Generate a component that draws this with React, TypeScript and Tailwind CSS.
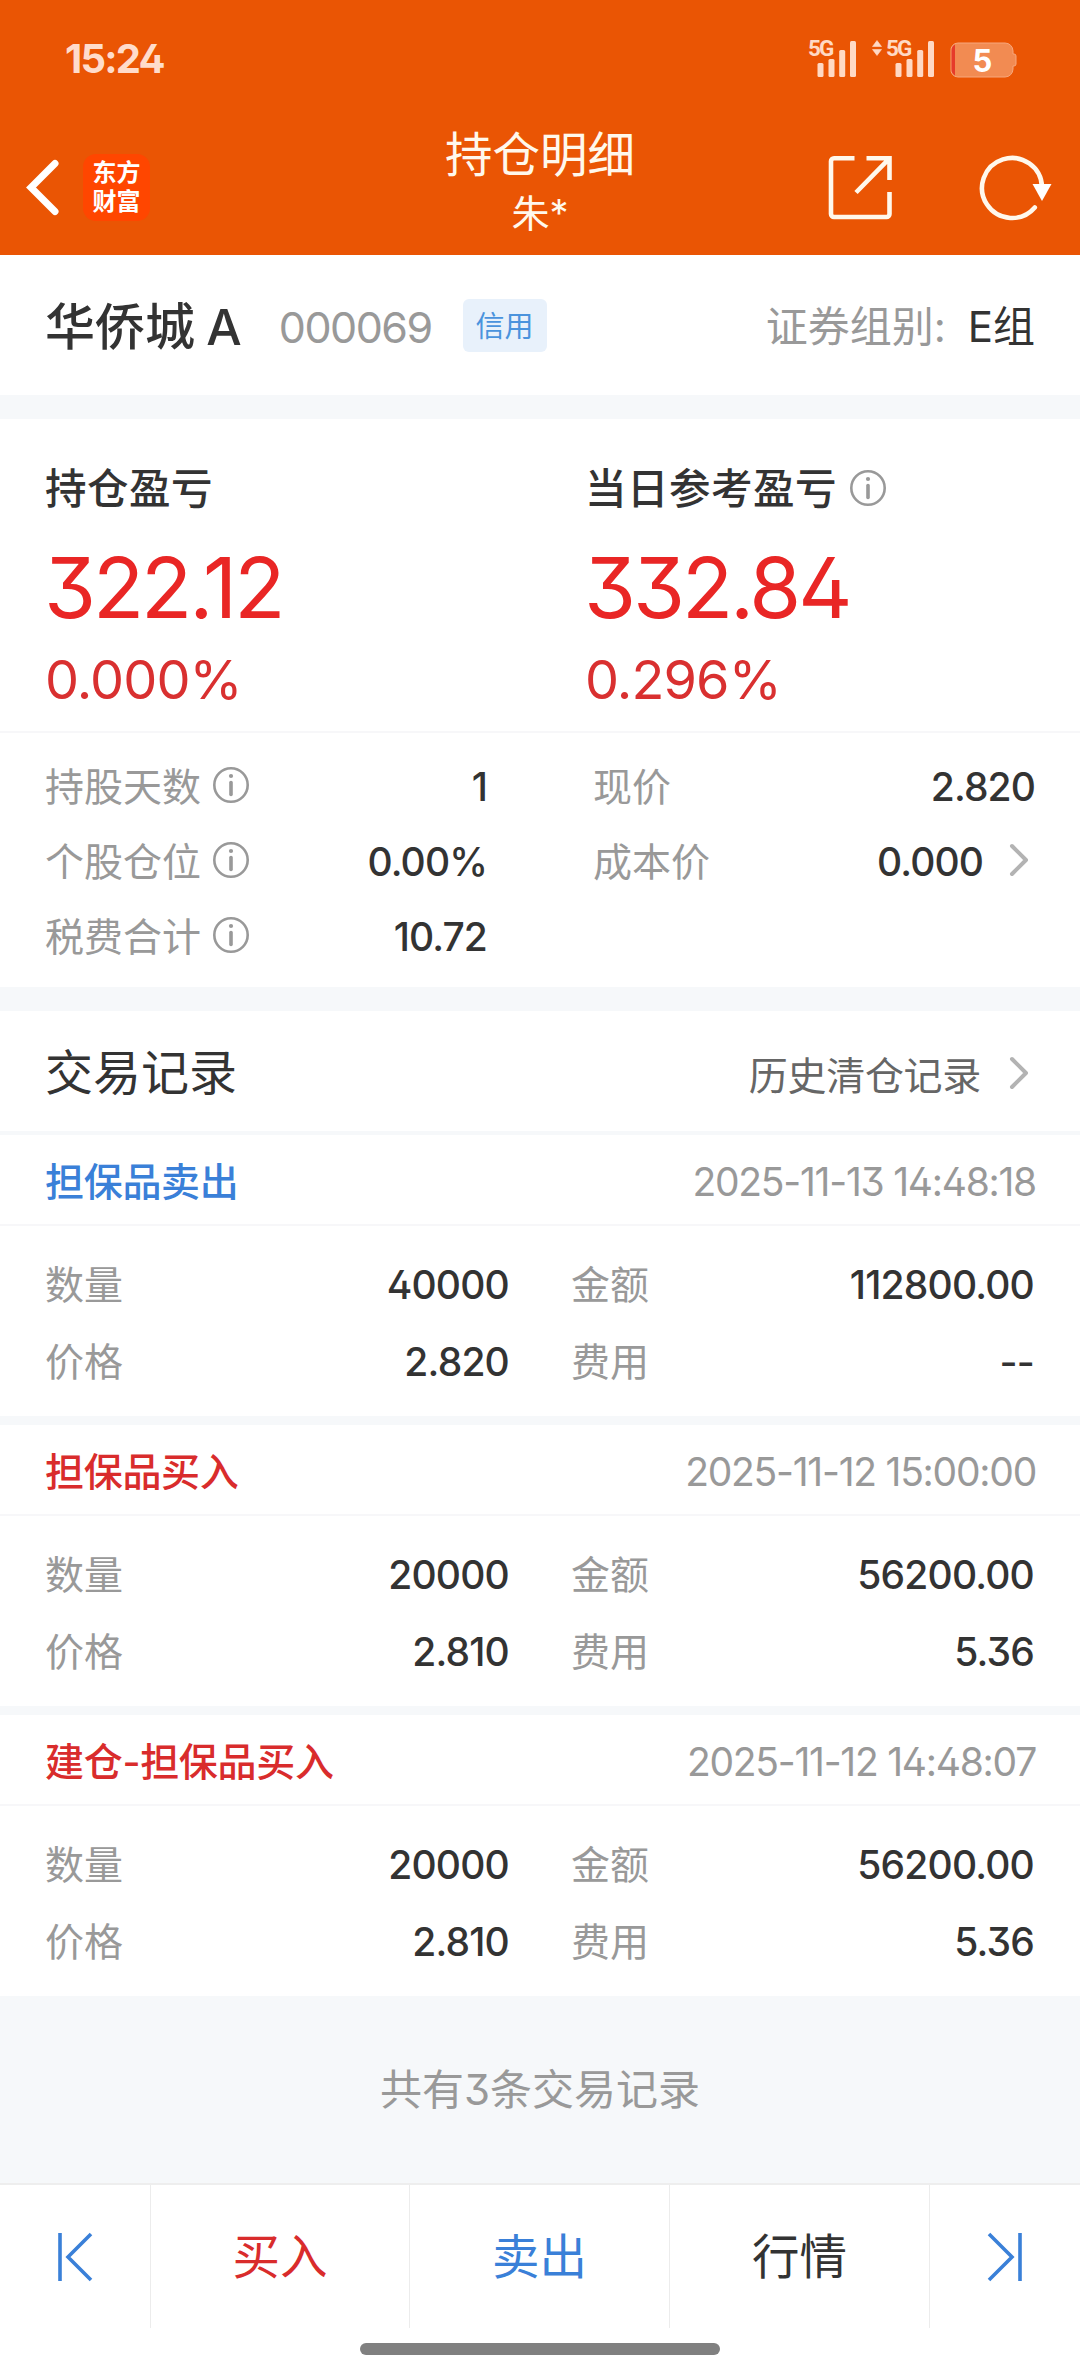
import { clsx } from "clsx"

type Trade = {
  title: string
  side: "buy" | "sell"
  time: string
  amount: string
  price: string
  total: string
  fee: string
}

const trades: Trade[] = [
  {
    title: "担保品卖出",
    side: "sell",
    time: "2025-11-13 14:48:18",
    amount: "40000",
    price: "2.820",
    total: "112800.00",
    fee: "--",
  },
  {
    title: "担保品买入",
    side: "buy",
    time: "2025-11-12 15:00:00",
    amount: "20000",
    price: "2.810",
    total: "56200.00",
    fee: "5.36",
  },
  {
    title: "建仓-担保品买入",
    side: "buy",
    time: "2025-11-12 14:48:07",
    amount: "20000",
    price: "2.810",
    total: "56200.00",
    fee: "5.36",
  },
]

function InfoIcon({ className }: { className?: string }) {
  return (
    <svg viewBox="0 0 36 36" className={clsx("w-9 h-9 shrink-0 text-[#999]", className)} fill="none" stroke="currentColor">
      <circle cx="18" cy="18" r="16.7" strokeWidth="2.6" />
      <path d="M18 15.5v12" strokeWidth="3.6" strokeLinecap="round" />
      <circle cx="18" cy="9" r="2.1" fill="currentColor" stroke="none" />
    </svg>
  )
}

function Chevron({ className }: { className?: string }) {
  return (
    <svg viewBox="0 0 20 34" className={clsx("w-5 h-[34px] shrink-0", className)} fill="none" stroke="#b3b3b3" strokeWidth="4" strokeLinecap="round" strokeLinejoin="round">
      <path d="M3 3l14 14L3 31" />
    </svg>
  )
}

function Signal({ arrows }: { arrows?: boolean }) {
  return (
    <div className="relative w-[49px] h-[38px] text-[#ffd9c4]">
      {arrows && (
        <svg viewBox="0 0 10 16" className="absolute -left-[14px] top-px w-[10px] h-4" fill="currentColor" stroke="currentColor" strokeWidth="0.6" strokeLinejoin="round">
          <path d="M5 .5l4.500 6h-9zM5 15.500l-4.500-6h9z" />
        </svg>
      )}
      <span className="absolute left-0 top-0 text-[22.5px] leading-[19px] font-bold tracking-[-2px] font-[Roboto,sans-serif]">5G</span>
      <svg viewBox="0 0 49 38" className="absolute inset-0 w-[49px] h-[38px]" fill="currentColor">
        <rect x="9.5" y="24" width="6" height="14" rx="1.5" />
        <rect x="20.5" y="20" width="6" height="18" rx="1.5" />
        <rect x="31.2" y="11" width="6" height="27" rx="1.5" />
        <rect x="42" y="2" width="6" height="36" rx="1.5" />
      </svg>
    </div>
  )
}

function StatusBar() {
  return (
    <div className="flex h-[116px] items-start justify-between pl-[65px] pr-[62px]">
      <span className="mt-[39px] text-[40px] leading-10 font-bold tracking-[-1.8px] text-[#ffdccb]">15:24</span>
      <div className="flex pt-[39px]">
        <Signal />
        <div className="w-[29px]" />
        <Signal arrows />
        <svg viewBox="0 0 68 36" className="ml-[15px] mt-[3px] w-[68px] h-9">
          <path d="M8 1h47a8 8 0 0 1 8 8v3h1a2 2 0 0 1 2 2v8a2 2 0 0 1-2 2h-1v3a8 8 0 0 1-8 8H8a7 7 0 0 1-7-8V9a7 7 0 0 1 7-8z" fill="#f28b52" stroke="#f7a77c" />
          <path d="M5 2.5v31A7 7 0 0 1 1.5 27V9A7 7 0 0 1 5 2.5z" fill="#e63b2a" />
          <text x="32.5" y="29.5" textAnchor="middle" fontSize="31" fontWeight="700" fontFamily="Inter, sans-serif" fill="#fff">5</text>
        </svg>
      </div>
    </div>
  )
}

function Header() {
  return (
    <header className="h-[255px] bg-[#ea5504] text-[#fff8ec]">
      <StatusBar />
      <div className="grid grid-cols-[1fr_auto_1fr] h-[139px]">
        <div className="flex items-start pl-[25px] pt-[38px]">
          <svg viewBox="0 0 36 68" className="w-9 h-[68px]" fill="none" stroke="#fff" strokeWidth="7" strokeLinecap="round">
            <path d="M30 9.5L6 33.5l24 24" />
          </svg>
          <div className="ml-[22px] flex flex-col items-center w-[67px] h-[67px] pt-1 rounded-[13px] bg-[#ff4600] text-[24px] leading-[29px] font-bold text-white">
            <span>东方</span>
            <span>财富</span>
          </div>
        </div>
        <div className="text-center">
          <h1 className="mt-[11px] text-[47.5px] leading-[56px]">持仓明细</h1>
          <p className="mt-[3px] text-[38px] leading-[54px]">朱*</p>
        </div>
        <div className="flex items-start justify-end pr-[27px] pt-[38px]">
          <svg viewBox="0 0 64 66" className="w-16 h-[66px]" fill="none" stroke="currentColor" strokeWidth="4.6">
            <path d="M26.5 4.3H6a3 3 0 0 0-3 3V60a3 3 0 0 0 3 3h52.5a3 3 0 0 0 3-3V38M38.5 4.3h23V26M28 38.5L61 4.8" />
          </svg>
          <svg viewBox="0 0 74 68" className="ml-[87px] w-[74px] h-[68px]" fill="none" stroke="currentColor" strokeWidth="4.6" strokeLinecap="round">
            <path d="M55.8 53.5A30 30 0 1 1 63 33" />
            <path d="M53.5 30h19L63 47z" fill="#fff" stroke="none" />
          </svg>
        </div>
      </div>
    </header>
  )
}

function Metric({ label, value, info, arrow, right }: { label: string; value: string; info?: boolean; arrow?: boolean; right?: boolean }) {
  return (
    <div className={clsx("flex h-[75px] items-center", right ? "pl-[53px] pr-[45px]" : "pl-[45px] pr-[53px]")}>
      <span className="text-[39px] text-[#999]">{label}</span>
      {info && <InfoIcon className="ml-3 -mt-1" />}
      <span className="ml-auto text-[39px] font-medium tracking-[-0.9px]">{value}</span>
      {arrow && <Chevron className="ml-[26px] mr-[6px] -mt-1" />}
    </div>
  )
}

function Profit({ label, value, percent, info }: { label: string; value: string; percent: string; info?: boolean }) {
  return (
    <div className="pl-[45px] pt-[39px]">
      <div className="flex h-[60px] items-center">
        <span className="mt-[3px] text-[41.5px] font-medium tracking-[0.5px]">{label}</span>
        {info && <InfoIcon className="ml-[13px]" />}
      </div>
      <div className="-ml-px mt-[20px] text-[84px] leading-[100px] tracking-[-3.1px] text-[#e92625]">{value}</div>
      <div className="mt-[12px] text-[54px] leading-[60px] tracking-[-0.9px] text-[#d93030]">{percent}</div>
    </div>
  )
}

function Pair({ label, value }: { label: string; value: string }) {
  return (
    <div className="flex h-[77px] items-center justify-between">
      <span className="text-[39px] text-[#999]">{label}</span>
      <span className="text-[39px] font-medium tracking-[-0.8px]">{value}</span>
    </div>
  )
}

function TradeCard({ trade }: { trade: Trade }) {
  return (
    <article className="h-[281px] bg-white">
      <div className="flex h-[91px] items-center justify-between border-b-2 border-[#f7f7f9] pl-[45px] pr-[44px] pt-[3px]">
        <span className={clsx("text-[39px] font-medium tracking-[-0.3px]", trade.side === "buy" ? "text-[#d92c2c]" : "text-[#3a80d8]")}>{trade.title}</span>
        <span className="text-[39px] tracking-[-1.25px] text-[#999]">{trade.time}</span>
      </div>
      <div className="grid grid-cols-[464px_463px] gap-x-[62px] pl-[45px] pt-[20px]">
        <Pair label="数量" value={trade.amount} />
        <Pair label="金额" value={trade.total} />
        <Pair label="价格" value={trade.price} />
        <Pair label="费用" value={trade.fee} />
      </div>
    </article>
  )
}

export default function App() {
  return (
    <div className="flex flex-col w-[1080px] h-[2376px] overflow-hidden bg-[#f6f8fa] text-[#333] whitespace-nowrap leading-none font-[Inter,'Noto_Sans_CJK_SC',sans-serif] [font-feature-settings:'cv09','cv02']">
      <Header />

      {/* Stock */}
      <section className="flex h-[140px] items-center bg-white pl-[45px] pr-[45px] pt-1">
        <span className="text-[50px] font-medium [word-spacing:-2px]">华侨城 A</span>
        <span className="ml-[37px] text-[43px] tracking-[-1.5px] text-[#999]">000069</span>
        <span className="ml-[31px] -mt-[3px] flex h-[53px] w-[84px] items-center justify-center rounded-[6px] bg-[#e8f1fb] pt-0.5 text-[29px] text-[#4a93dd]">信用</span>
        <span className="ml-auto text-[42px] text-[#999]">证券组别:</span>
        <span className="ml-[22px] text-[42px]">E组</span>
      </section>

      {/* Profit and position */}
      <section className="mt-6 h-[568px] bg-white">
        <div className="grid grid-cols-2 h-[314px] border-b-2 border-[#f7f7f9]">
          <Profit label="持仓盈亏" value="322.12" percent="0.000%" />
          <Profit label="当日参考盈亏" value="332.84" percent="0.296%" info />
        </div>
        <div className="grid grid-cols-2 pt-[16px]">
          <Metric label="持股天数" value="1" info />
          <Metric label="现价" value="2.820" right />
          <Metric label="个股仓位" value="0.00%" info />
          <Metric label="成本价" value="0.000" arrow right />
          <Metric label="税费合计" value="10.72" info />
        </div>
      </section>

      {/* Trade records */}
      <section className="mt-6">
        <div className="flex h-[120px] items-center bg-white pl-[45px] pr-[51px] pt-[3px]">
          <h2 className="text-[48px]">交易记录</h2>
          <span className="ml-auto mt-[5px] text-[39px] tracking-[-0.3px] text-[#666]">历史清仓记录</span>
          <Chevron className="ml-[28px]" />
        </div>
        <div className="mt-1 flex flex-col gap-[9px]">
          {trades.map((trade) => (
            <TradeCard key={trade.time} trade={trade} />
          ))}
        </div>
      </section>

      <p className="flex h-[187px] items-center justify-center text-[42px] text-[#999]">共有3条交易记录</p>

      {/* Bottom bar */}
      <footer className="h-[193px] border-t-2 border-[#eeeeee] bg-white">
        <nav className="grid grid-cols-[151px_259px_260px_260px_150px] h-[143px] divide-x divide-[#ececec] text-[47.5px]">
          <div className="flex items-center justify-center">
            <svg viewBox="0 0 36 50" className="w-9 h-[50px]" fill="none" stroke="#3a80d8" strokeWidth="3.6">
              <path d="M3 1v48M34 2L11 25l23 23" />
            </svg>
          </div>
          <div className="flex items-center justify-center pt-px text-[#d92c2c]">买入</div>
          <div className="flex items-center justify-center pt-px text-[#3a80d8]">卖出</div>
          <div className="flex items-center justify-center pt-px">行情</div>
          <div className="flex items-center justify-center">
            <svg viewBox="0 0 36 50" className="w-9 h-[50px]" fill="none" stroke="#3a80d8" strokeWidth="3.6">
              <path d="M33 1v48M2 2l23 23L2 48" />
            </svg>
          </div>
        </nav>
        <div className="mx-auto mt-[15px] h-3 w-[360px] rounded-full bg-[#808080]" />
      </footer>
    </div>
  )
}
